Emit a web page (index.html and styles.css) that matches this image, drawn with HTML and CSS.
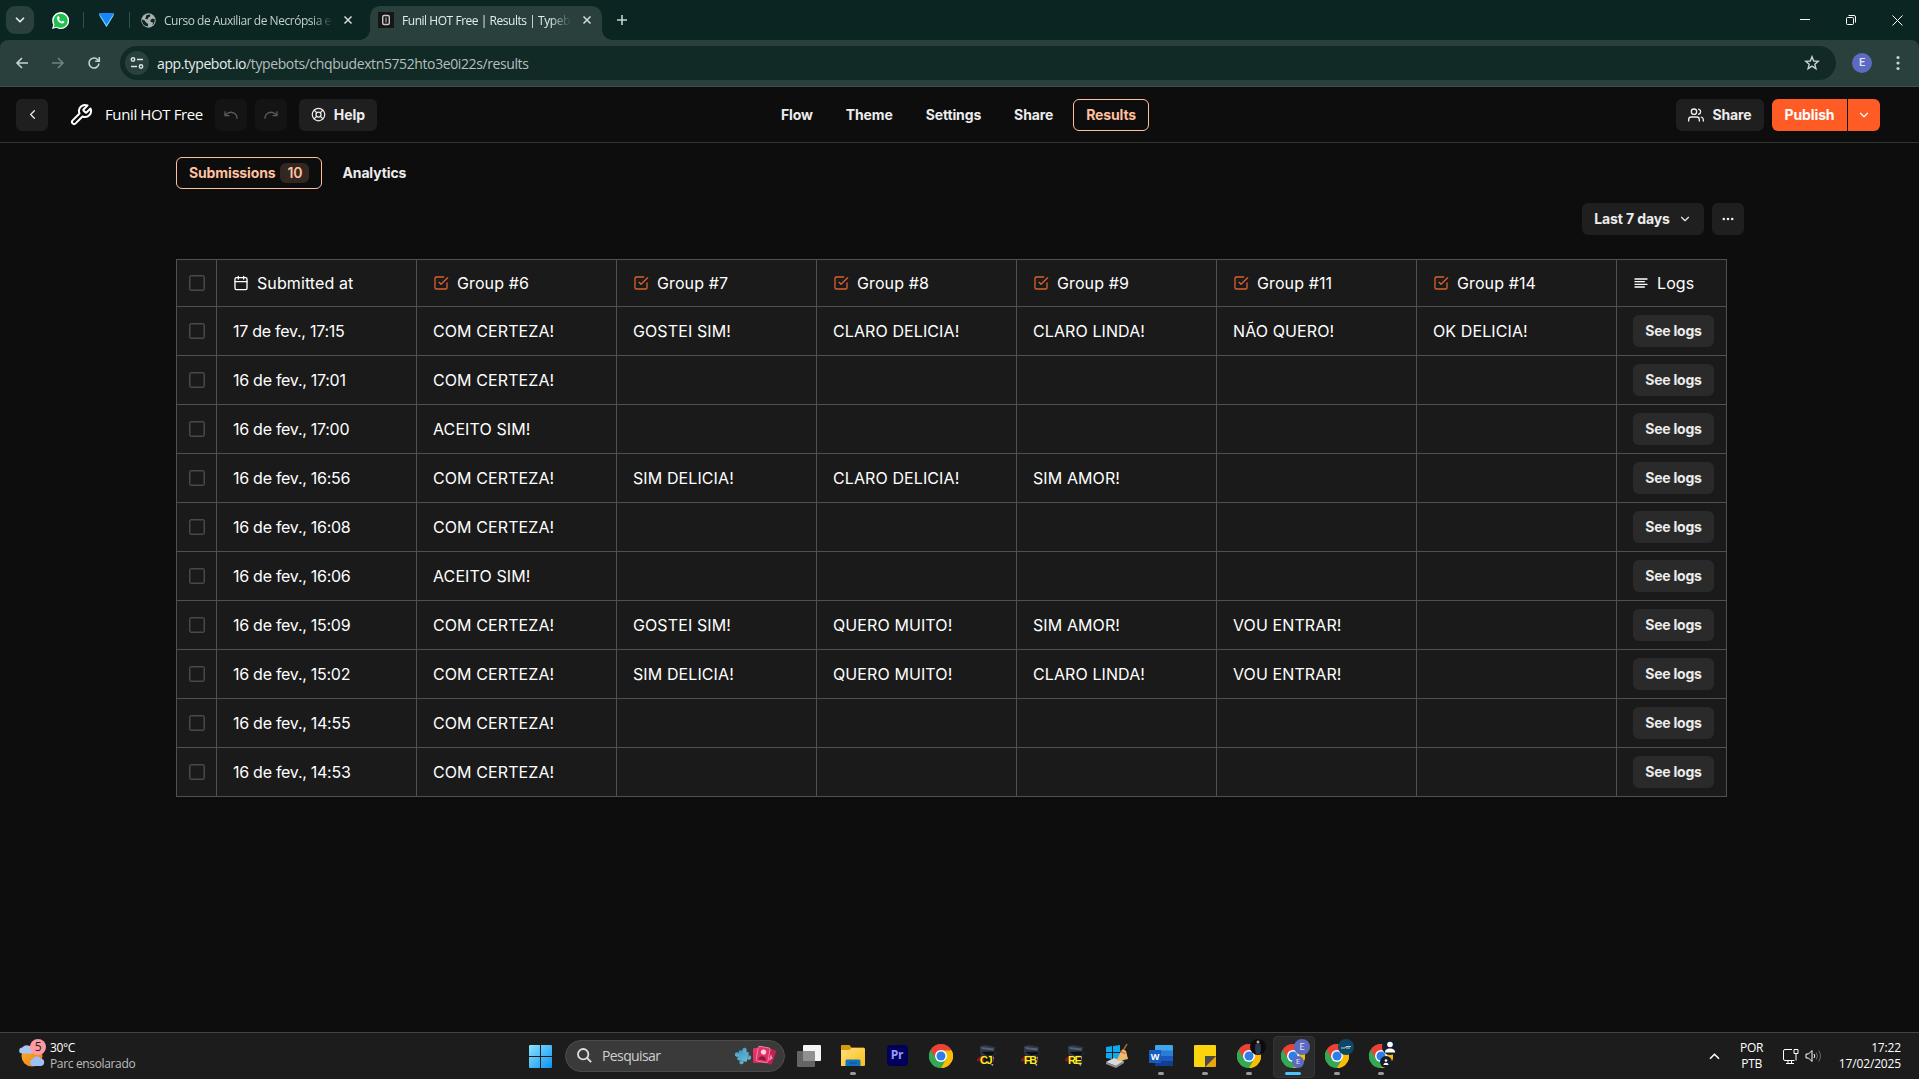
FILE: index.html
```html
<!DOCTYPE html>
<html lang="pt-BR">
<head>
<meta charset="utf-8">
<title>Funil HOT Free | Results | Typebot</title>
<link rel="stylesheet" href="styles.css">
</head>
<body>
<svg class="defs" width="0" height="0" aria-hidden="true">
  <defs>
    <linearGradient id="g-win" x1="0" y1="0" x2="1" y2="1"><stop offset="0" stop-color="#8be3fc"/><stop offset="1" stop-color="#0b93f5"/></linearGradient>
    <linearGradient id="g-folder" x1="0" y1="0" x2="1" y2="1"><stop offset="0" stop-color="#ffe07a"/><stop offset="1" stop-color="#f9be1c"/></linearGradient>
    <linearGradient id="g-sun" x1="0" y1="0" x2="1" y2="1"><stop offset="0" stop-color="#f7b32b"/><stop offset="1" stop-color="#f07c12"/></linearGradient>
    <linearGradient id="g-puzzle" x1="0" y1="0" x2="1" y2="1"><stop offset="0" stop-color="#3f92cf"/><stop offset="1" stop-color="#6fc0c4"/></linearGradient>
    <linearGradient id="g-card" x1="0" y1="0" x2="1" y2="1"><stop offset="0" stop-color="#f03a6b"/><stop offset="1" stop-color="#c01f52"/></linearGradient>
  </defs>
  <symbol id="check" viewBox="0 0 24 24"><path d="M9 11l3 3L22 4M21 12v7a2 2 0 0 1-2 2H5a2 2 0 0 1-2-2V5a2 2 0 0 1 2-2h11"/></symbol>
  <symbol id="chevron" viewBox="0 0 24 24"><path d="M6 9l6 6 6-6"/></symbol>
  <symbol id="close" viewBox="0 0 10 10"><path d="M1.5 1.5l7 7M8.500 1.500l-7 7"/></symbol>
  <symbol id="chrome" viewBox="0 0 48 48">
    <path fill="#ea4335" d="M24 24L3.200 12A24 24 0 0 1 44.800 12z"/>
    <path fill="#34a853" d="M24 24L24 48A24 24 0 0 1 3.200 12z"/>
    <path fill="#fbbc04" d="M24 24L44.800 12A24 24 0 0 1 24 48z"/>
    <path fill="#ea4335" d="M3.200 12L13.600 30L24 13H44.800A24 24 0 0 0 3.200 12z"/>
    <path fill="#fbbc04" d="M24 13H45.300A24 24 0 0 1 24 48L34.400 30z"/>
    <path fill="#34a853" d="M34.400 30L24 48A24 24 0 0 1 3.200 12L13.600 30z"/>
    <circle cx="24" cy="24" r="12" fill="#fff"/><circle cx="24" cy="24" r="9" fill="#2f7de9"/>
  </symbol>
  <symbol id="vandal" viewBox="0 0 24 24">
    <path fill="#8d1420" d="M2 15l5-4 4 2-1 5-8-1z"/>
    <path fill="#2f3846" d="M5 2l5-1 10 2-1 4 3 3-9 3-7-2-1-3z"/>
    <path fill="#566377" d="M6 3l13 1.500-1 2-11-1.500z"/><path fill="#0c0e12" d="M6 8l12-.5 3 2.500-9 1.500z"/>
    <path fill="#b9bcc4" d="M16 12l3 1-1 9-3-2z"/><path fill="#14161b" d="M8 12h10l1 8-9 1z"/>
  </symbol>
</svg>

<header class="browser">
  <div class="tabstrip">
    <button class="tab-search"><svg class="line" width="14" height="14"><use href="#chevron"/></svg></button>
    <div class="pinned pinned-wa"><svg width="17" height="17" viewBox="0 0 18 18"><path fill="#fff" d="M0 18l1.300-4.600A9 9 0 1 1 4.600 16.800z"/><path fill="#1fc04f" d="M1.800 16.300l.9-3.200A7.500 7.500 0 1 1 5 15.500z"/><path fill="#fff" d="M6 4.800c.5-.6 1.200-.5 1.400 0l.7 1.500c.1.500-.7 1-.6 1.300.5 1.200 1.600 2 2.700 2.500.5 0 .8-.9 1.200-.9l1.700.9c.2 1.300-.8 2.100-2 2.100C8 12 5.200 9 5.200 6.600c0-.8.3-1.300.8-1.800z"/></svg></div>
    <i class="tab-sep"></i>
    <div class="pinned"><svg width="15" height="14" viewBox="0 0 15 14"><path fill="#1a86fd" d="M0 0h15L7.500 14z"/><path fill="#6fe0f5" d="M0 0l.6 3L7.500 14l6.900-11L15 0 7.500 12z"/></svg></div>
    <i class="tab-sep"></i>
    <div class="tab">
      <svg width="15" height="15" viewBox="0 0 16 16"><circle cx="8" cy="8" r="7.700" fill="#a9b0ae"/><path fill="#0c2622" d="M1 7l3 1 1.500 2.500 2 1V14C4 14.500 1 12 1 7zM6 2l4-.5L9.500 4l-2 1L7 7 4.500 6zM14.500 6.500L12 6l-2 1.500.5 2 2.500.500L12 13c2-1.500 3-4 2.500-6.500z"/></svg>
      <span class="tab-title">Curso de Auxiliar de Necrópsia e</span>
      <svg class="x" width="10" height="10"><use href="#close"/></svg>
    </div>
    <div class="tab active">
      <svg width="16" height="16"><rect width="16" height="16" fill="#161616"/><rect x="4.700" y="3.500" width="6.600" height="9" rx="1.500" fill="none" stroke="#c9c9c9" stroke-width="1.400"/><path d="M8 5.500v5" stroke="#c9c9c9"/></svg>
      <span class="tab-title">Funil HOT Free | Results | Typeb</span>
      <svg class="x" width="10" height="10"><use href="#close"/></svg>
    </div>
    <svg class="new-tab" width="12" height="12"><path d="M6 1v10M1 6h10" stroke="#c2d3cf" stroke-width="1.600"/></svg>
    <div class="win-controls">
      <svg width="10" height="10"><path d="M0 4.500h10"/></svg>
      <svg width="10" height="10"><rect x=".5" y="2.500" width="7" height="7" rx="1" /><path d="M2.500.5H8Q9.500.5 9.500 2v5.500"/></svg>
      <svg width="11" height="11"><path d="M.5.5l10 10M10.500.5l-10 10"/></svg>
    </div>
  </div>
  <div class="toolbar">
    <svg class="nav" width="14" height="14"><path d="M13 7H2M7 2L2 7l5 5"/></svg>
    <svg class="nav dim" width="14" height="14"><path d="M1 7h11M7 2l5 5-5 5"/></svg>
    <svg class="nav" width="14" height="14"><path d="M12 7.500A5 5 0 1 1 10.800 3.700L12 5M12.300 1v4.200H8.200"/></svg>
    <div class="omnibox">
      <span class="site-info"><svg width="14" height="14"><circle cx="3" cy="3.500" r="1.700"/><path d="M7 3.500h6M1 10.500h6"/><circle cx="11" cy="10.500" r="1.700"/></svg></span>
      <span class="url"><b>app.typebot.io</b>/typebots/chqbudextn5752hto3e0i22s/results</span>
      <svg class="star" width="16" height="16" viewBox="0 0 16 16"><path d="M8 1.700l1.700 4.300 4.600.3-3.500 2.900 1.100 4.500L8 11.200l-3.900 2.500 1.100-4.500L1.700 6.300 6.300 6z"/></svg>
    </div>
    <span class="profile">E</span>
    <svg class="menu" width="4" height="16"><circle cx="2" cy="2.500" r="1.600"/><circle cx="2" cy="8" r="1.600"/><circle cx="2" cy="13.500" r="1.600"/></svg>
  </div>
</header>

<div class="editor-bar">
  <div class="bar-left">
    <button class="btn icon-btn"><svg class="line" width="15" height="15" viewBox="0 0 24 24"><path d="M15 18l-6-6 6-6"/></svg></button>
    <svg class="line wrench" width="24" height="24" viewBox="0 0 24 24"><path d="M14.700 6.300a1 1 0 0 0 0 1.400l1.600 1.600a1 1 0 0 0 1.400 0l3.770-3.770a6 6 0 0 1-7.940 7.940l-6.910 6.910a2.120 2.120 0 0 1-3-3l6.910-6.910a6 6 0 0 1 7.940-7.940l-3.760 3.760z"/></svg>
    <span class="bot-name">Funil HOT Free</span>
    <button class="btn icon-btn disabled"><svg class="line" width="16" height="16" viewBox="0 0 24 24"><path d="M3 7v6h6M21 17a9 9 0 0 0-15-6.700L3 13"/></svg></button>
    <button class="btn icon-btn disabled"><svg class="line" width="16" height="16" viewBox="0 0 24 24"><path d="M21 7v6h-6M3 17a9 9 0 0 1 15-6.700L21 13"/></svg></button>
    <button class="btn help"><svg class="line" width="15" height="15" viewBox="0 0 24 24"><circle cx="12" cy="12" r="10"/><circle cx="12" cy="12" r="4"/><path d="M4.930 4.930l4.240 4.240M14.830 9.170l4.240-4.240M14.830 14.830l4.240 4.240M9.170 14.830l-4.240 4.240"/></svg><span>Help</span></button>
  </div>
  <nav class="bar-nav">
    <a class="nav-link">Flow</a><a class="nav-link">Theme</a><a class="nav-link">Settings</a><a class="nav-link">Share</a><a class="nav-link selected">Results</a>
  </nav>
  <div class="bar-right">
    <button class="btn share"><svg class="line" width="16" height="16" viewBox="0 0 24 24"><path d="M17 21v-2a4 4 0 0 0-4-4H5a4 4 0 0 0-4 4v2"/><circle cx="9" cy="7" r="4"/><path d="M23 21v-2a4 4 0 0 0-3-3.870M16 3.130a4 4 0 0 1 0 7.750"/></svg><span>Share</span></button>
    <div class="publish"><button class="btn"><span>Publish</span></button><button class="btn caret"><svg class="line" width="14" height="14"><use href="#chevron"/></svg></button></div>
  </div>
</div>

<main class="content">
  <div class="subnav">
    <a class="nav-link selected">Submissions<span class="count">10</span></a>
    <a class="nav-link">Analytics</a>
  </div>
  <div class="filters">
    <button class="btn range"><span>Last 7 days</span><svg class="line" width="14" height="14"><use href="#chevron"/></svg></button>
    <button class="btn icon-btn"><svg width="12" height="4" fill="#ececec"><circle cx="1.800" cy="2" r="1.300"/><circle cx="6" cy="2" r="1.300"/><circle cx="10.200" cy="2" r="1.300"/></svg></button>
  </div>
  <table class="results">
    <colgroup><col class="c-check"><col span="7" class="c-data"><col class="c-logs"></colgroup>
    <thead>
      <tr>
        <th><i class="box"></i></th>
        <th><span><svg class="line" width="16" height="16" viewBox="0 0 24 24"><rect x="3" y="4" width="18" height="18" rx="2"/><path d="M16 2v4M8 2v4M3 10h18"/></svg>Submitted at</span></th>
        <th><span><svg class="line orange" width="16" height="16"><use href="#check"/></svg>Group #6</span></th>
        <th><span><svg class="line orange" width="16" height="16"><use href="#check"/></svg>Group #7</span></th>
        <th><span><svg class="line orange" width="16" height="16"><use href="#check"/></svg>Group #8</span></th>
        <th><span><svg class="line orange" width="16" height="16"><use href="#check"/></svg>Group #9</span></th>
        <th><span><svg class="line orange" width="16" height="16"><use href="#check"/></svg>Group #11</span></th>
        <th><span><svg class="line orange" width="16" height="16"><use href="#check"/></svg>Group #14</span></th>
        <th><span><svg class="line" width="16" height="16" viewBox="0 0 24 24"><path d="M17 10H3M21 6H3M21 14H3M17 18H3"/></svg>Logs</span></th>
      </tr>
    </thead>
    <tbody>
      <tr><td><i class="box"></i></td><td>17 de fev., 17:15</td><td>COM CERTEZA!</td><td>GOSTEI SIM!</td><td>CLARO DELICIA!</td><td>CLARO LINDA!</td><td>NÃO QUERO!</td><td>OK DELICIA!</td><td><button class="btn logs"><span>See logs</span></button></td></tr>
      <tr><td><i class="box"></i></td><td>16 de fev., 17:01</td><td>COM CERTEZA!</td><td></td><td></td><td></td><td></td><td></td><td><button class="btn logs"><span>See logs</span></button></td></tr>
      <tr><td><i class="box"></i></td><td>16 de fev., 17:00</td><td>ACEITO SIM!</td><td></td><td></td><td></td><td></td><td></td><td><button class="btn logs"><span>See logs</span></button></td></tr>
      <tr><td><i class="box"></i></td><td>16 de fev., 16:56</td><td>COM CERTEZA!</td><td>SIM DELICIA!</td><td>CLARO DELICIA!</td><td>SIM AMOR!</td><td></td><td></td><td><button class="btn logs"><span>See logs</span></button></td></tr>
      <tr><td><i class="box"></i></td><td>16 de fev., 16:08</td><td>COM CERTEZA!</td><td></td><td></td><td></td><td></td><td></td><td><button class="btn logs"><span>See logs</span></button></td></tr>
      <tr><td><i class="box"></i></td><td>16 de fev., 16:06</td><td>ACEITO SIM!</td><td></td><td></td><td></td><td></td><td></td><td><button class="btn logs"><span>See logs</span></button></td></tr>
      <tr><td><i class="box"></i></td><td>16 de fev., 15:09</td><td>COM CERTEZA!</td><td>GOSTEI SIM!</td><td>QUERO MUITO!</td><td>SIM AMOR!</td><td>VOU ENTRAR!</td><td></td><td><button class="btn logs"><span>See logs</span></button></td></tr>
      <tr><td><i class="box"></i></td><td>16 de fev., 15:02</td><td>COM CERTEZA!</td><td>SIM DELICIA!</td><td>QUERO MUITO!</td><td>CLARO LINDA!</td><td>VOU ENTRAR!</td><td></td><td><button class="btn logs"><span>See logs</span></button></td></tr>
      <tr><td><i class="box"></i></td><td>16 de fev., 14:55</td><td>COM CERTEZA!</td><td></td><td></td><td></td><td></td><td></td><td><button class="btn logs"><span>See logs</span></button></td></tr>
      <tr><td><i class="box"></i></td><td>16 de fev., 14:53</td><td>COM CERTEZA!</td><td></td><td></td><td></td><td></td><td></td><td><button class="btn logs"><span>See logs</span></button></td></tr>
    </tbody>
  </table>
</main>

<footer class="taskbar">
  <div class="weather">
    <div class="weather-icon">
      <svg width="26" height="24" viewBox="0 0 26 24"><circle cx="13" cy="12" r="10.500" fill="url(#g-sun)"/><path fill="#a9c6f5" d="M3 9.500a3 3 0 0 1 .5-6 5 5 0 0 1 8.500 0 3 3 0 0 1 1 6z"/><path fill="#9cc0f7" d="M14 22a3.500 3.500 0 0 1-.5-6.800 5 5 0 0 1 8.500-.7 3.800 3.800 0 0 1 0 7.500z"/></svg>
      <span class="badge">5</span>
    </div>
    <div class="weather-text"><span>30°C</span><span class="muted">Parc ensolarado</span></div>
  </div>
  <div class="apps">
    <svg class="start" width="23" height="23" fill="url(#g-win)"><path d="M1 0h10v11H0V1a1 1 0 0 1 1-1zM12 0h10a1 1 0 0 1 1 1v10H12zM0 12h11v11H1a1 1 0 0 1-1-1zM12 12h11v10a1 1 0 0 1-1 1H12z"/></svg>
    <div class="search">
      <svg width="15" height="15" fill="none" stroke="#dedede" stroke-width="1.800"><circle cx="6.200" cy="6.200" r="5.200"/><path d="M10 10l4.200 4.200"/></svg>
      <span>Pesquisar</span>
      <svg width="42" height="22" viewBox="0 0 42 22">
        <g fill="url(#g-puzzle)" transform="rotate(14 9 11)"><rect x="4" y="6" width="10" height="10" rx="1"/><circle cx="9" cy="4.800" r="2.200"/><circle cx="9" cy="17.200" r="2.200"/><circle cx="2.800" cy="11" r="2.200"/><circle cx="15.200" cy="11" r="2.200"/></g>
        <g transform="rotate(20 36 12)"><rect x="30" y="4" width="10" height="15" rx="1.500" fill="#c61f52"/><path d="M36 9l3 3.500-3 3.500z" fill="#ff87ab"/></g>
        <rect x="19" y="3" width="11" height="15" rx="1.500" fill="url(#g-card)"/>
        <g transform="rotate(10 29 10)"><rect x="23" y="2" width="12" height="15" rx="1.500" fill="#dc3468" stroke="#ff8fb0" stroke-width=".8"/><circle cx="29" cy="7" r="2.600" fill="#ffd3de"/><path d="M25 15c1-5 7-5 8 0z" fill="#8d1740"/></g>
      </svg>
    </div>
    <div class="app"><svg width="24" height="24"><rect x="6" y="1" width="18" height="16" rx="1" fill="#f4f4f4"/><rect x="0" y="7" width="18" height="16" rx="1" fill="#777" fill-opacity=".8"/></svg></div>
    <div class="app open"><svg width="24" height="24"><path fill="#d99a0c" d="M1 1h7.500l2 2.500H23V10H0V2a1 1 0 0 1 1-1z"/><path fill="url(#g-folder)" d="M0 6h8.500l2-2H23a1 1 0 0 1 1 1v16a1 1 0 0 1-1 1H0z"/><path fill="#1272c0" d="M4.500 22v-5a1.500 1.500 0 0 1 1.500-1.500h12a1.500 1.500 0 0 1 1.500 1.500v5z"/><path d="M8 19h8" stroke="#0a4f8e"/></svg></div>
    <div class="app"><span class="pr">Pr</span></div>
    <div class="app"><svg width="24" height="24"><use href="#chrome"/></svg></div>
    <div class="app vandal"><svg width="24" height="24"><use href="#vandal"/></svg><b>CJ</b></div>
    <div class="app vandal"><svg width="24" height="24"><use href="#vandal"/></svg><b>FB</b></div>
    <div class="app vandal"><svg width="24" height="24"><use href="#vandal"/></svg><b>RE</b></div>
    <div class="app"><svg width="24" height="24"><path fill="#10a9ee" d="M1 3l6-1v6H1zM8 2l7-1v7H8zM1 9h6v6l-6-1zM8 9h7v6l-7-.5z"/><path fill="#d9d9d9" d="M1 18l8-4 10 3-8 5z"/><path fill="#909090" d="M1 18l10 4v2L1 20zM11 22l8-5v2l-8 5z"/><path fill="#efbd6a" d="M18 5l3 2 2 8-9 2-3-1c2-1 4-7 5-9z"/><path d="M18.500 6L22 0" stroke="#b5762a" stroke-width="1.400"/><path fill="#e2564a" d="M16 7l4.500 2-.5 1-5-2z"/></svg></div>
    <div class="app open"><svg width="24" height="24"><path fill="#41a5ee" d="M7 1h16a1 1 0 0 1 1 1v5H6V2a1 1 0 0 1 1-1z"/><path fill="#2b7cd3" d="M6 6.500h18V12H6z"/><path fill="#185abd" d="M6 12h18v5H6z"/><path fill="#103f91" d="M6 17h18v4a1 1 0 0 1-1 1H7a1 1 0 0 1-1-1z"/></svg><b class="w">W</b></div>
    <div class="app open"><svg width="24" height="24"><path fill="#fcd40b" d="M1 2a1 1 0 0 1 1-1h20a1 1 0 0 1 1 1v10L12 23H2a1 1 0 0 1-1-1z"/><path fill="#e9a90c" d="M23 12v10a1 1 0 0 1-1 1H12z"/><path fill="#4a4a4a" d="M12 12h11L12 23z"/></svg></div>
    <div class="app open"><svg width="24" height="24"><use href="#chrome"/></svg><span class="av dark"><svg width="16" height="16"><circle cx="8" cy="3" r="1.500" fill="#caa58e"/><path fill="#26384f" d="M5.500 5h5l.5 5-1 5H6l-1-5z"/></svg></span></div>
    <div class="app open current"><svg width="24" height="24"><use href="#chrome"/></svg><span class="av">E</span><span class="av small">E</span></div>
    <div class="app open"><svg width="24" height="24"><use href="#chrome"/></svg><span class="av blue"><svg width="10" height="4"><path d="M0 3h4l1-1.500h5M5 3h4" stroke="#b9ccd6" fill="none"/></svg></span></div>
    <div class="app open"><svg width="24" height="24"><use href="#chrome"/></svg><span class="av navy"><svg width="12" height="12" fill="#fff"><circle cx="6" cy="3.500" r="2.800"/><path d="M.8 11.500c0-5.500 10.400-5.500 10.400 0z"/></svg></span><span class="av small navy"><svg width="6" height="6" fill="#fff"><circle cx="3" cy="1.500" r="1.300"/><path d="M.5 6c0-3 5-3 5 0z"/></svg></span></div>
  </div>
  <div class="tray">
    <svg class="up" width="11" height="7"><path d="M1 5.800l4.500-4.500L10 5.800"/></svg>
    <div class="lang"><span>POR</span><span>PTB</span></div>
    <svg class="net" width="17" height="17"><path d="M10 1.500H3A1.500 1.500 0 0 0 1.500 3v8A1.500 1.500 0 0 0 3 12.500h9.500M4 15.500h8M6 12.500v3M9.500 12.500v3M12 1.500h4v4h-4zM14 5.500v7"/></svg>
    <svg class="vol" width="17" height="14"><path d="M1 5h2.500L7 1.500v11L3.500 9H1z"/><path d="M9 5q1.500 2 0 4"/><path class="fade" d="M11.200 3.500q2.500 3.500 0 7M13.500 1.500q4 5.500 0 11"/></svg>
    <div class="clock"><span>17:22</span><span>17/02/2025</span></div>
  </div>
</footer>
</body>
</html>
```
FILE: styles.css
```css
* { box-sizing: border-box; }
html, body { height: 100%; margin: 0; }
body {
  display: flex;
  flex-direction: column;
  height: 1079px;
  overflow: hidden;
  background: #0d0d0d;
  color: #fff;
  font-family: Inter, sans-serif;
  font-size: 16px;
}
button { border: 0; padding: 0; font: inherit; color: inherit; }
svg { display: block; flex: none; }
.defs { position: absolute; }
.line { fill: none; stroke: currentColor; stroke-width: 2; stroke-linecap: round; stroke-linejoin: round; }

/* Browser chrome */
.browser { flex: none; height: 87px; background: #0b2622; font-family: "Open Sans", "Noto Sans", sans-serif; }
.tabstrip { display: flex; align-items: center; height: 40px; padding-left: 6px; }
.tab-search { display: flex; align-items: center; justify-content: center; width: 28px; height: 28px; border-radius: 9px; background: #29403c; color: #e3ecea; }
.tab-search .line { stroke-width: 3; }
.pinned { display: flex; justify-content: center; width: 45px; }
.pinned-wa { width: 49px; padding-left: 3px; }
.tab-sep { width: 1px; height: 16px; background: #35504b; }
.tab { display: flex; align-items: center; width: 240px; height: 34px; padding-left: 11px; gap: 8px; font-size: 12px; letter-spacing: -.46px; color: #c3cfcc; }
.tab-title { width: 170px; overflow: hidden; white-space: nowrap; -webkit-mask-image: linear-gradient(90deg, #000 148px, transparent 169px); mask-image: linear-gradient(90deg, #000 148px, transparent 169px); }
.tab .x { margin-left: 1px; stroke: #d3dddb; stroke-width: 1.5; }
.tab.active { position: relative; align-self: flex-end; width: 232px; padding: 0 0 6px 8px; border-radius: 10px 10px 0 0; background: #29403c; color: #e4eceb; }
.tab.active .x { margin-left: 2px; }
.tab.active::before, .tab.active::after { content: ""; position: absolute; bottom: 0; width: 10px; height: 10px; }
.tab.active::before { left: -10px; background: radial-gradient(circle at 0 0, transparent 9.500px, #29403c 10px); }
.tab.active::after { right: -10px; background: radial-gradient(circle at 100% 0, transparent 9.500px, #29403c 10px); }
.new-tab { margin-left: 14px; }
.win-controls { display: flex; gap: 36px; margin-left: auto; padding-right: 16px; fill: none; stroke: #fff; stroke-width: 1; }
.toolbar { display: flex; align-items: center; height: 47px; padding: 0 0 1px 15px; background: #29403c; border-radius: 8px 8px 0 0; border-bottom: 1px solid #414d4a; }
.nav { margin-right: 22px; fill: none; stroke: #c6d4d1; stroke-width: 1.600; }
.nav.dim { stroke: #6f827e; }
.nav:nth-child(3) { margin-right: 19px; }
.omnibox { display: flex; align-items: center; width: 1716px; height: 34px; padding: 0 16px 0 5px; border-radius: 17px; background: #112a26; }
.site-info { display: flex; align-items: center; justify-content: center; width: 24px; height: 24px; border-radius: 50%; background: #29403c; }
.site-info svg { fill: none; stroke: #dbe4e2; stroke-width: 1.500; }
.url { margin-left: 8px; padding-top: 1px; font-size: 14px; letter-spacing: -.395px; color: #b6bfbd; }
.url b { font-weight: 400; color: #e6eeec; }
.star { margin-left: auto; fill: none; stroke: #c6d4d1; stroke-width: 1.400; }
.profile { display: flex; align-items: center; justify-content: center; width: 20px; height: 20px; margin-left: 16px; border-radius: 50%; background: #5c6bc0; color: #e3e5f5; font: 500 11px Roboto, sans-serif; }
.menu { margin-left: 24px; fill: #c6d4d1; }

/* Editor header */
.btn { display: flex; align-items: center; justify-content: center; height: 32px; border-radius: 6px; background: #1f1f1f; color: #ececec; font-size: 14px; font-weight: 700; letter-spacing: -.12px; }
.btn span { padding-bottom: 1px; }
.icon-btn { width: 32px; }
.editor-bar { position: relative; display: flex; flex: none; align-items: center; justify-content: space-between; height: 56px; padding: 0 39px 0 16px; border-bottom: 1px solid #333; }
.bar-left, .bar-right { display: flex; align-items: center; }
.wrench { margin-left: 21px; }
.bot-name { width: 98px; margin-left: 12px; padding-bottom: 1px; white-space: nowrap; font: 15px "Open Sans", sans-serif; letter-spacing: -.38px; }
.bar-left .disabled { margin-left: 12px; background: #141414; color: #5b5b5b; }
.bar-left .disabled + .disabled { margin-left: 8px; }
.help { width: 78px; gap: 8px; margin-left: 12px; letter-spacing: 0; }
.bar-nav { position: absolute; left: 768px; top: 12px; display: flex; gap: 7px; }
.nav-link { display: flex; align-items: center; height: 32px; padding: 0 12px 2px; border: 1px solid transparent; border-radius: 6px; color: #ececec; font-size: 14px; font-weight: 700; letter-spacing: -.13px; }
.selected { border-color: #ffc09f; color: #ffc09f; }
.share { width: 88px; gap: 8px; }
.publish { display: flex; gap: 1px; margin-left: 8px; }
.publish .btn { width: 75px; border-radius: 6px 0 0 6px; background: #ff5b24; color: #fff; }
.publish .caret { width: 32px; border-radius: 0 6px 6px 0; }

/* Results page */
.content { display: flex; flex: 1; flex-direction: column; width: 1568px; margin-left: 176px; padding-top: 14px; }
.subnav { display: flex; gap: 7px; }
.subnav .nav-link { padding-bottom: 1px; }
.count { display: flex; align-items: center; justify-content: center; width: 29px; height: 20px; margin-left: 5px; border-radius: 6px; background: #332722; font-weight: 600; }
.filters { display: flex; justify-content: flex-end; gap: 8px; margin-top: 14px; }
.range { width: 122px; gap: 8px; }
.results { width: 1551px; margin-top: 24px; border-collapse: collapse; table-layout: fixed; background: #1a1a1a; }
.c-check { width: 40px; }
.c-data { width: 200px; }
.c-logs { width: 110px; }
th, td { height: 49px; padding: 0 0 0 16px; border: 1px solid #505050; text-align: left; font-weight: 400; letter-spacing: .1px; white-space: nowrap; }
th { height: 47px; }
th span { display: flex; align-items: center; gap: 8px; }
th:first-child, td:first-child { padding-left: 12px; }
td:nth-child(2) { letter-spacing: -.27px; }
.orange { color: #d9602f; }
.box { display: block; width: 16px; height: 16px; border: 1px solid #484848; border-radius: 2px; box-shadow: inset 0 0 0 .5px #484848; }
.logs { width: 81px; background: #2a2a2a; letter-spacing: -.22px; }

/* Taskbar */
.taskbar { position: relative; display: flex; flex: none; align-items: center; justify-content: space-between; height: 47px; border-top: 1px solid #444; background: #1c1c1c; font-family: "Open Sans", "Noto Sans", sans-serif; font-size: 12px; letter-spacing: -.35px; }
.weather { display: flex; align-items: center; gap: 5px; padding-left: 19px; }
.weather-icon { position: relative; width: 26px; }
.badge { position: absolute; right: -1px; top: -5px; width: 16px; height: 16px; border-radius: 50%; background: #ff99a4; color: #222; font-size: 12px; line-height: 16px; text-align: center; }
.weather-text, .lang, .clock { display: flex; flex-direction: column; line-height: 16px; }
.muted { color: #bdbdbd; }
.apps { position: absolute; left: 529px; top: 0; display: flex; align-items: center; height: 46px; }
.search { display: flex; align-items: center; width: 220px; height: 32px; margin: 0 2px 1px 13px; padding: 0 8px 0 11px; border: 1px solid #4c4c4c; border-radius: 16px; background: #3a3a3a; color: #cfcfcf; font-size: 14px; letter-spacing: -.6px; }
.search span { margin: 0 auto 0 10px; }
.app { position: relative; display: flex; align-items: center; justify-content: center; width: 44px; height: 46px; padding-bottom: 1px; }
.open::after { content: ""; position: absolute; left: 19px; bottom: 4px; width: 6px; height: 3px; border-radius: 2px; background: #9a9a9a; }
.current::before { content: ""; position: absolute; left: 2px; top: 3px; width: 40px; height: 40px; border: 1px solid #353535; border-radius: 4px; background: #2b2b2b; }
.current > svg { position: relative; }
.current::after { left: 14px; width: 16px; background: #4cc2ff; }
.pr { width: 21px; height: 21px; border-radius: 4px; background: #00005b; color: #9999ff; font: 700 12px/20px "Open Sans", sans-serif; text-align: center; }
.vandal { padding-left: 3px; }
.vandal b { position: absolute; left: 17px; top: 22px; color: #ffee1c; font: 700 11px/11px "Liberation Sans", sans-serif; letter-spacing: -1.4px; }
.w { position: absolute; left: 10px; top: 17px; width: 12px; height: 13px; background: #185abd; color: #fff; font: 700 9px/13px "Open Sans", sans-serif; text-align: center; }
.av { position: absolute; left: 23px; top: 6px; display: flex; align-items: center; justify-content: center; width: 16px; height: 16px; border-radius: 50%; background: #5c6bc0; color: #e3e5f5; font: 9px Roboto, sans-serif; letter-spacing: 0; }
.av.small { left: 21px; top: 23px; width: 12px; height: 12px; font-size: 7px; }
.av.dark { background: #0c0c0e; }
.av.blue { background: #0c4766; }
.av.navy { background: #151d2c; }
.tray { display: flex; align-items: center; padding-right: 18px; fill: none; stroke: #fff; stroke-width: 1; }
.tray svg { fill: none; }
.tray .up { stroke-width: 1.600; }
.lang { align-items: center; margin-left: 20px; }
.net { margin-left: 19px; }
.vol { margin-left: 6px; }
.vol .fade { stroke: #6a6a6a; }
.clock { align-items: flex-end; width: 79px; letter-spacing: -.15px; }
.lang span, .clock span { stroke: none; }
```
